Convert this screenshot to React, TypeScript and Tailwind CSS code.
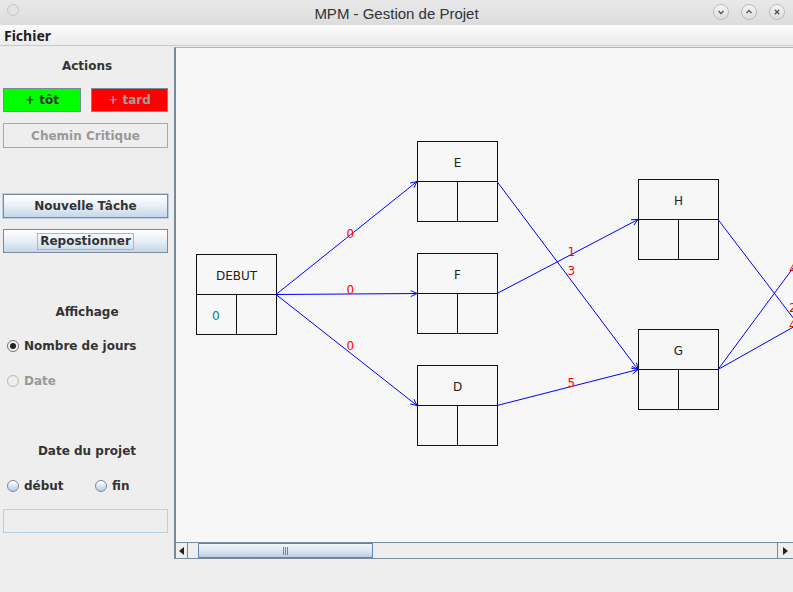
import React from "react";

type Node = { label: string; x: number; y: number; start?: string };
type Edge = { x1: number; y1: number; x2: number; y2: number; w: string };

const nodes: Node[] = [
  { label: "DEBUT", x: 196, y: 254, start: "0" },
  { label: "E", x: 417, y: 141 },
  { label: "F", x: 417, y: 253 },
  { label: "D", x: 417, y: 365 },
  { label: "H", x: 638, y: 179 },
  { label: "G", x: 638, y: 329 },
];

const edges: Edge[] = [
  { x1: 276, y1: 294, x2: 417, y2: 181, w: "0" },
  { x1: 276, y1: 294, x2: 417, y2: 293, w: "0" },
  { x1: 276, y1: 294, x2: 417, y2: 405, w: "0" },
  { x1: 497, y1: 181, x2: 638, y2: 369, w: "3" },
  { x1: 497, y1: 293, x2: 638, y2: 219, w: "1" },
  { x1: 497, y1: 405, x2: 638, y2: 369, w: "5" },
  { x1: 718, y1: 219, x2: 860, y2: 405, w: "2" },
  { x1: 718, y1: 369, x2: 860, y2: 177, w: "4" },
  { x1: 718, y1: 369, x2: 860, y2: 289, w: "4" },
];

const dialog = { fontFamily: "'DejaVu Sans', sans-serif" };

function Arrow({ e }: { e: Edge }) {
  const a = Math.atan2(e.y2 - e.y1, e.x2 - e.x1);
  const len = 7;
  const p1 = [e.x2 - len * Math.cos(a - 0.45), e.y2 - len * Math.sin(a - 0.45)];
  const p2 = [e.x2 - len * Math.cos(a + 0.45), e.y2 - len * Math.sin(a + 0.45)];
  return (
    <g stroke="#0000ff" strokeWidth={1} fill="none">
      <line x1={e.x1} y1={e.y1 + 0.5} x2={e.x2} y2={e.y2 + 0.5} />
      <polyline points={`${p1[0]},${p1[1] + 0.5} ${e.x2},${e.y2 + 0.5} ${p2[0]},${p2[1] + 0.5}`} />
    </g>
  );
}

function Radio({ checked, disabled, shaded }: { checked?: boolean; disabled?: boolean; shaded?: boolean }) {
  return (
    <span
      className={
        "flex items-center justify-center w-[12px] h-[12px] rounded-full border " +
        (disabled
          ? "border-[#b8b8b8] bg-[#eeeeee]"
          : shaded
          ? "border-[#7a8a99] bg-gradient-to-b from-white to-[#b8cfe5]"
          : "border-[#6e6e6e] bg-[#f4f4f4]")
      }
    >
      {checked && <span className="w-[6px] h-[6px] rounded-full bg-[#222]" />}
    </span>
  );
}

function TitleButton({ kind }: { kind: "min" | "max" | "close" }) {
  return (
    <span className="flex items-center justify-center w-[16px] h-[16px] rounded-full border border-[#bcbcbc] bg-gradient-to-b from-[#f4f4f4] to-[#dedede]">
      <svg width="8" height="8" viewBox="0 0 8 8" fill="none" stroke="#555" strokeWidth="1.3">
        {kind === "min" && <polyline points="1.5,3 4,5.5 6.5,3" />}
        {kind === "max" && <polyline points="1.5,5 4,2.5 6.5,5" />}
        {kind === "close" && (
          <>
            <line x1="1.8" y1="1.8" x2="6.2" y2="6.2" />
            <line x1="6.2" y1="1.8" x2="1.8" y2="6.2" />
          </>
        )}
      </svg>
    </span>
  );
}

const oceanBtn =
  "flex items-center justify-center h-[24px] border border-[#7a8a99] bg-gradient-to-b from-white via-[#e8eff7] to-[#c6d6e7] text-[12px] font-bold text-[#333333]";

export default function App() {
  return (
    <div className="w-[793px] h-[592px] bg-[#eeeeee] flex flex-col overflow-hidden" style={dialog}>
      {/* title bar */}
      <div className="relative h-[25px] flex items-center justify-center bg-gradient-to-b from-[#e9e9e9] to-[#dcdcdc]">
        <span className="absolute left-[7px] top-[4px] w-[12px] h-[12px] rounded-full border border-[#c4c4c4] bg-[#e4e4e4]" />
        <span className="text-[15px] text-[#2e3436] leading-none pt-[1px]" style={{ fontFamily: "'Liberation Sans', sans-serif" }}>
          MPM - Gestion de Projet
        </span>
        <div className="absolute right-[8px] top-[4px] flex gap-[12px]">
          <TitleButton kind="min" />
          <TitleButton kind="max" />
          <TitleButton kind="close" />
        </div>
      </div>

      {/* menu bar */}
      <div className="h-[21px] flex items-center px-[4px] bg-gradient-to-b from-[#fbfbfb] to-[#ececec] border-b border-[#c9c9c9]">
        <span className="text-[14px] font-bold text-[#1e1e1e]" style={{ fontFamily: "'Noto Sans', sans-serif" }}>
          Fichier
        </span>
      </div>

      <div className="flex flex-1">
        {/* left panel */}
        <div className="w-[174px] flex flex-col px-[3px] text-[12px] font-bold text-[#333333]">
          <div className="mt-[12px] h-[16px] flex items-center justify-center">Actions</div>
          <div className="mt-[14px] flex justify-between pr-[3px]">
            <div className="w-[78px] h-[24px] flex items-center justify-center bg-[#00ff00] border border-[#7a8a99] text-[#333333]">
              + tôt
            </div>
            <div className="w-[77px] h-[24px] flex items-center justify-center bg-[#ff0000] border border-[#7a8a99] text-[#a0a0a0]">
              + tard
            </div>
          </div>
          <div className="mt-[11px] w-[165px] h-[25px] flex items-center justify-center border border-[#a8a8a8] text-[#999999]">
            Chemin Critique
          </div>
          <div className={oceanBtn + " mt-[46px] w-[165px] h-[23px] outline outline-1 outline-[#b8cfe5]"}>Nouvelle Tâche</div>
          <div className={oceanBtn + " mt-[11px] w-[165px]"}>
            <span className="border border-[#a3b8cc] px-[2px] leading-[15px]">Repostionner</span>
          </div>

          <div className="mt-[51px] h-[16px] flex items-center justify-center">Affichage</div>
          <div className="mt-[17px] h-[17px] flex items-center gap-[5px] pl-[4px]">
            <Radio checked />
            <span>Nombre de jours</span>
          </div>
          <div className="mt-[18px] h-[17px] flex items-center gap-[5px] pl-[4px] text-[#999999]">
            <Radio disabled />
            <span>Date</span>
          </div>

          <div className="mt-[54px] h-[16px] flex items-center justify-center">Date du projet</div>
          <div className="mt-[18px] h-[17px] flex items-center pl-[4px]">
            <div className="flex items-center gap-[5px] w-[88px]">
              <Radio shaded />
              <span>début</span>
            </div>
            <div className="flex items-center gap-[5px]">
              <Radio shaded />
              <span>fin</span>
            </div>
          </div>
          <div className="mt-[15px] w-[165px] h-[24px] border border-[#b8cfe5] bg-[#eeeeee]" />
        </div>

        {/* scroll pane */}
        <div className="flex-1 flex flex-col">
          <div className="mt-[1px] h-[512px] flex flex-col border-t border-[#a9b6c4] border-l-2 border-l-[#7a8a99]">
            <div className="h-[495px] bg-[#f7f7f7] overflow-hidden">
              <svg width="617" height="495" viewBox="176 48 617 495" className="block">
                {nodes.map((n) => (
                  <g key={n.label} stroke="#111" strokeWidth={1} fill="none" shapeRendering="crispEdges">
                    <rect x={n.x + 0.5} y={n.y + 0.5} width={80} height={80} />
                    <line x1={n.x} y1={n.y + 40.5} x2={n.x + 80} y2={n.y + 40.5} />
                    <line x1={n.x + 40.5} y1={n.y + 40} x2={n.x + 40.5} y2={n.y + 80} />
                    <text
                      x={n.x + 40.5}
                      y={n.y + 26}
                      textAnchor="middle"
                      stroke="none"
                      fill="#222"
                      fontSize="12"
                      fontFamily="'DejaVu Sans', sans-serif"
                    >
                      {n.label}
                    </text>
                    {n.start && (
                      <text x={n.x + 16} y={n.y + 66} stroke="none" fill="#008080" fontSize="12" fontFamily="'DejaVu Sans', sans-serif">
                        {n.start}
                      </text>
                    )}
                  </g>
                ))}
                {edges.map((e, i) => (
                  <Arrow key={i} e={e} />
                ))}
                {edges.map((e, i) => (
                  <text
                    key={"t" + i}
                    x={(e.x1 + e.x2) / 2}
                    y={(e.y1 + e.y2) / 2}
                    fill="#ff0000"
                    fontSize="12"
                    fontFamily="'DejaVu Sans', sans-serif"
                  >
                    {e.w}
                  </text>
                ))}
              </svg>
            </div>
            {/* horizontal scrollbar */}
            <div className="h-[17px] flex border-t border-b border-[#7a8a99] bg-[#eeeeee]">
              <div className="w-[12px] flex items-center justify-center border-r border-[#7a8a99]">
                <svg width="5" height="8" viewBox="0 0 5 8">
                  <polygon points="5,0 0,4 5,8" fill="#222" />
                </svg>
              </div>
              <div className="w-[10px]" />
              <div className="w-[175px] flex items-center justify-center border border-[#6382bf] bg-gradient-to-b from-[#f0f5fa] via-[#dde8f3] to-[#bccfe3]">
                <div className="flex gap-[1px]">
                  <span className="w-[1px] h-[8px] bg-white border-l border-[#6382bf]" />
                  <span className="w-[1px] h-[8px] bg-[#6382bf]" />
                  <span className="w-[1px] h-[8px] bg-[#6382bf]" />
                </div>
              </div>
              <div className="flex-1" />
              <div className="w-[16px] flex items-center justify-center border-l border-[#7a8a99]">
                <svg width="5" height="8" viewBox="0 0 5 8">
                  <polygon points="0,0 5,4 0,8" fill="#222" />
                </svg>
              </div>
            </div>
          </div>
        </div>
      </div>
    </div>
  );
}
